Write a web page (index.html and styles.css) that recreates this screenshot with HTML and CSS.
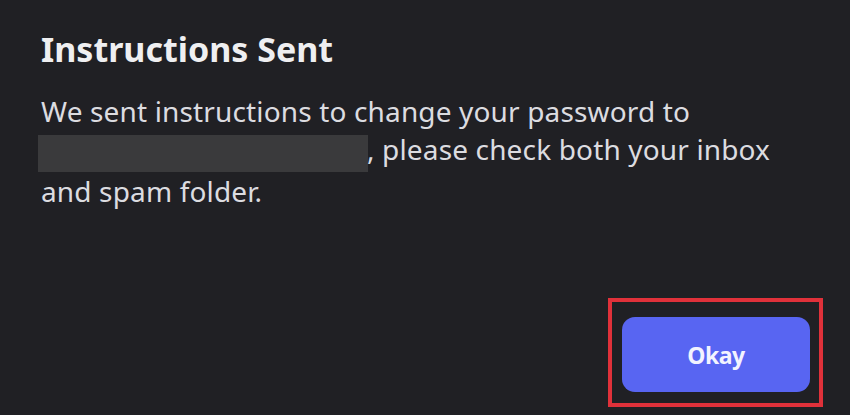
FILE: index.html
```html
<!DOCTYPE html>
<html lang="en">
<head>
<meta charset="utf-8">
<title>Instructions Sent</title>
<link rel="stylesheet" href="styles.css">
</head>
<body>
<div class="modal">
  <h1 class="title">Instructions Sent</h1>
  <p class="message">We sent instructions to change your password to <span class="redacted"></span>, please check both your inbox and spam folder.</p>
  <div class="footer">
    <div class="highlight">
      <button class="okay" type="button">Okay</button>
    </div>
  </div>
</div>
</body>
</html>
```

FILE: styles.css
```css
html, body {
  margin: 0;
  padding: 0;
  background: #202024;
}
body {
  width: 850px;
  height: 415px;
  overflow: hidden;
  font-family: "Noto Sans", "Open Sans", sans-serif;
  color: #ececee;
}
.modal {
  padding: 27px 20px 0 41px;
  box-sizing: border-box;
  height: 415px;
  display: flex;
  flex-direction: column;
}
.title {
  margin: 0;
  font-size: 34px;
  font-weight: 700;
  line-height: 44px;
  color: #efeff1;
}
.message {
  margin: 21px 0 0 0;
  width: 770px;
  font-size: 28px;
  line-height: 38px;
  letter-spacing: 0.15px;
  color: #dcdce0;
}
.redacted {
  display: inline-block;
  width: 330px;
  height: 37px;
  margin-left: -3px;
  margin-right: -1px;
  vertical-align: -12px;
  background: #3a3a3c;
}
.footer {
  margin-top: auto;
  display: flex;
  justify-content: flex-end;
  padding-right: 7px;
  padding-bottom: 8px;
}
.highlight {
  border: 4px solid #e0313a;
  padding: 15px 9px 11px 10px;
}
.okay {
  display: block;
  width: 188px;
  height: 75px;
  border: none;
  border-radius: 13px;
  background: #5865f2;
  color: #f2f3ff;
  font-family: "Noto Sans", "Open Sans", sans-serif;
  font-size: 23px;
  font-weight: 700;
  letter-spacing: -0.5px;
}
```
